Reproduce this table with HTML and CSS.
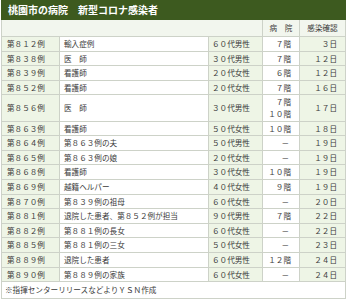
FILE: index.html
```html
<!DOCTYPE html>
<html lang="ja">
<head>
<meta charset="utf-8">
<link rel="stylesheet" href="styles.css">
</head>
<body>
<table class="tbl">
  <colgroup>
    <col class="c1"><col class="c2"><col class="c3"><col class="c4"><col class="c5">
  </colgroup>
  <thead>
    <tr><th class="title" colspan="5">桃園市の病院　新型コロナ感染者</th></tr>
    <tr class="head">
      <th colspan="3"></th>
      <th class="hc">病　院</th>
      <th class="hc">感染確認</th>
    </tr>
  </thead>
  <tbody>
    <tr><td class="no">第８１２例</td><td class="who">輸入症例</td><td class="age">６０代男性</td><td class="fl">７階</td><td class="day">３日</td></tr>
    <tr><td class="no">第８３８例</td><td class="who">医　師</td><td class="age">３０代男性</td><td class="fl">７階</td><td class="day">１２日</td></tr>
    <tr><td class="no">第８３９例</td><td class="who">看護師</td><td class="age">２０代女性</td><td class="fl">６階</td><td class="day">１２日</td></tr>
    <tr><td class="no">第８５２例</td><td class="who">看護師</td><td class="age">２０代女性</td><td class="fl">７階</td><td class="day">１６日</td></tr>
    <tr><td class="no">第８５６例</td><td class="who">医　師</td><td class="age">３０代男性</td><td class="fl">７階<br>１０階</td><td class="day">１７日</td></tr>
    <tr><td class="no">第８６３例</td><td class="who">看護師</td><td class="age">５０代女性</td><td class="fl">１０階</td><td class="day">１８日</td></tr>
    <tr><td class="no">第８６４例</td><td class="who">第８６３例の夫</td><td class="age">５０代男性</td><td class="fl dash">－</td><td class="day">１９日</td></tr>
    <tr><td class="no">第８６５例</td><td class="who">第８６３例の娘</td><td class="age">２０代女性</td><td class="fl dash">－</td><td class="day">１９日</td></tr>
    <tr><td class="no">第８６８例</td><td class="who">看護師</td><td class="age">３０代女性</td><td class="fl">１０階</td><td class="day">１９日</td></tr>
    <tr><td class="no">第８６９例</td><td class="who">越籍ヘルパー</td><td class="age">４０代女性</td><td class="fl">９階</td><td class="day">１９日</td></tr>
    <tr><td class="no">第８７０例</td><td class="who">第８３９例の祖母</td><td class="age">６０代女性</td><td class="fl dash">－</td><td class="day">２０日</td></tr>
    <tr><td class="no">第８８１例</td><td class="who">退院した患者、第８５２例が担当</td><td class="age">９０代男性</td><td class="fl">７階</td><td class="day">２２日</td></tr>
    <tr><td class="no">第８８２例</td><td class="who">第８８１例の長女</td><td class="age">６０代女性</td><td class="fl dash">－</td><td class="day">２２日</td></tr>
    <tr><td class="no">第８８５例</td><td class="who">第８８１例の三女</td><td class="age">５０代女性</td><td class="fl dash">－</td><td class="day">２３日</td></tr>
    <tr><td class="no">第８８９例</td><td class="who">退院した患者</td><td class="age">６０代男性</td><td class="fl">１２階</td><td class="day">２４日</td></tr>
    <tr><td class="no">第８９０例</td><td class="who">第８８９例の家族</td><td class="age">６０代女性</td><td class="fl dash">－</td><td class="day">２４日</td></tr>
  </tbody>
  <tfoot>
    <tr><td class="foot" colspan="5">※指揮センターリリースなどよりＹＳＮ作成</td></tr>
  </tfoot>
</table>
</body>
</html>
```

FILE: styles.css
```css
html, body {
  margin: 0;
  padding: 0;
  background: #ffffff;
}

body {
  font-family: "Noto Sans CJK JP", "Noto Sans", sans-serif;
  color: #3a3a3a;
}

.tbl {
  margin: 0 0 0 1px;
  width: 344px;
  table-layout: fixed;
  border-collapse: collapse;
  font-size: 7.6px;
}

.c1 { width: 58px; }
.c2 { width: 149px; }
.c3 { width: 54px; }
.c4 { width: 37px; }
.c5 { width: 46px; }

.tbl th,
.tbl td {
  border: 1px solid #cdd2c8;
  padding: 1px 0;
  line-height: 11.6px;
  font-weight: normal;
  white-space: nowrap;
  overflow: visible;
}

.title {
  background: #3d5a1f;
  color: #ffffff;
  font-weight: bold !important;
  font-size: 10px;
  line-height: 18px !important;
  text-align: left;
  padding: 0 0 0 6px !important;
  border-color: #3d5a1f !important;
}

.head th {
  background: #f2f6ee;
  height: 14px;
  padding-top: 1px;
  padding-bottom: 1px;
}

.hc {
  text-align: center;
}

.no {
  background: #eef5e6;
  padding-left: 5px !important;
}

.who {
  background: #ffffff;
  padding-left: 4px !important;
}

.age {
  background: #eef5e6;
  padding-left: 3px !important;
}

.fl {
  background: #ffffff;
  text-align: right;
  padding-right: 8px !important;
}

.fl.dash {
  padding-right: 10px !important;
}

.day {
  background: #eef5e6;
  text-align: right;
  padding-right: 8px !important;
}

.foot {
  background: #ffffff;
  padding: 2px 0 2px 3px !important;
}
```
